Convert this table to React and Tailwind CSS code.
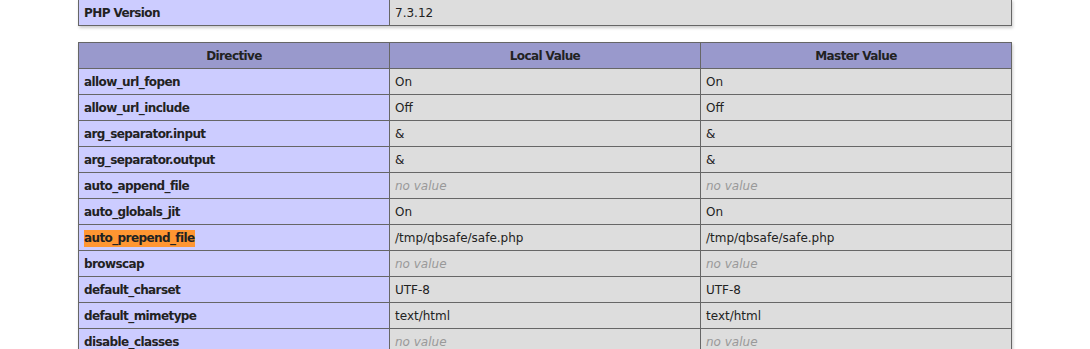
import React from 'react';

const rows = [
  ['allow_url_fopen', 'On', 'On'],
  ['allow_url_include', 'Off', 'Off'],
  ['arg_separator.input', '&', '&'],
  ['arg_separator.output', '&', '&'],
  ['auto_append_file', null, null],
  ['auto_globals_jit', 'On', 'On'],
  ['auto_prepend_file', '/tmp/qbsafe/safe.php', '/tmp/qbsafe/safe.php', true],
  ['browscap', null, null],
  ['default_charset', 'UTF-8', 'UTF-8'],
  ['default_mimetype', 'text/html', 'text/html'],
  ['disable_classes', null, null],
];

const cell = 'border border-[#666] px-[5px] pt-[5px] pb-[3px] leading-[17px] align-baseline';
const bold = 'font-bold tracking-[-0.6px]';

function Value({ v }) {
  if (v === null) return <i className="text-[#999]">no value</i>;
  return v;
}

export default function App() {
  return (
    <div className="bg-white min-h-[349px] text-[#222] text-[12px] font-['DejaVu_Sans',Verdana,sans-serif]">
      <table className="mx-auto -mt-px w-[934px] table-fixed border-collapse shadow-[1px_2px_3px_#ccc]">
        <tbody>
          <tr>
            <td className={`${cell} ${bold} w-[311px] bg-[#ccf]`}>PHP Version</td>
            <td className={`${cell} bg-[#ddd]`}>7.3.12</td>
          </tr>
        </tbody>
      </table>

      <table className="mx-auto mt-4 w-[934px] table-fixed border-collapse shadow-[1px_2px_3px_#ccc]">
        <thead>
          <tr className={`bg-[#99c] ${bold}`}>
            <th className={`${cell} w-[311px]`}>Directive</th>
            <th className={`${cell} w-[311px]`}>Local Value</th>
            <th className={cell}>Master Value</th>
          </tr>
        </thead>
        <tbody>
          {rows.map(([name, local, master, hit]) => (
            <tr key={name}>
              <td className={`${cell} ${bold} bg-[#ccf]`}>
                {hit ? <span className="inline-block leading-[17px] bg-[#ff9632]">{name}</span> : name}
              </td>
              <td className={`${cell} bg-[#ddd]`}><Value v={local} /></td>
              <td className={`${cell} bg-[#ddd]`}><Value v={master} /></td>
            </tr>
          ))}
        </tbody>
      </table>
    </div>
  );
}
